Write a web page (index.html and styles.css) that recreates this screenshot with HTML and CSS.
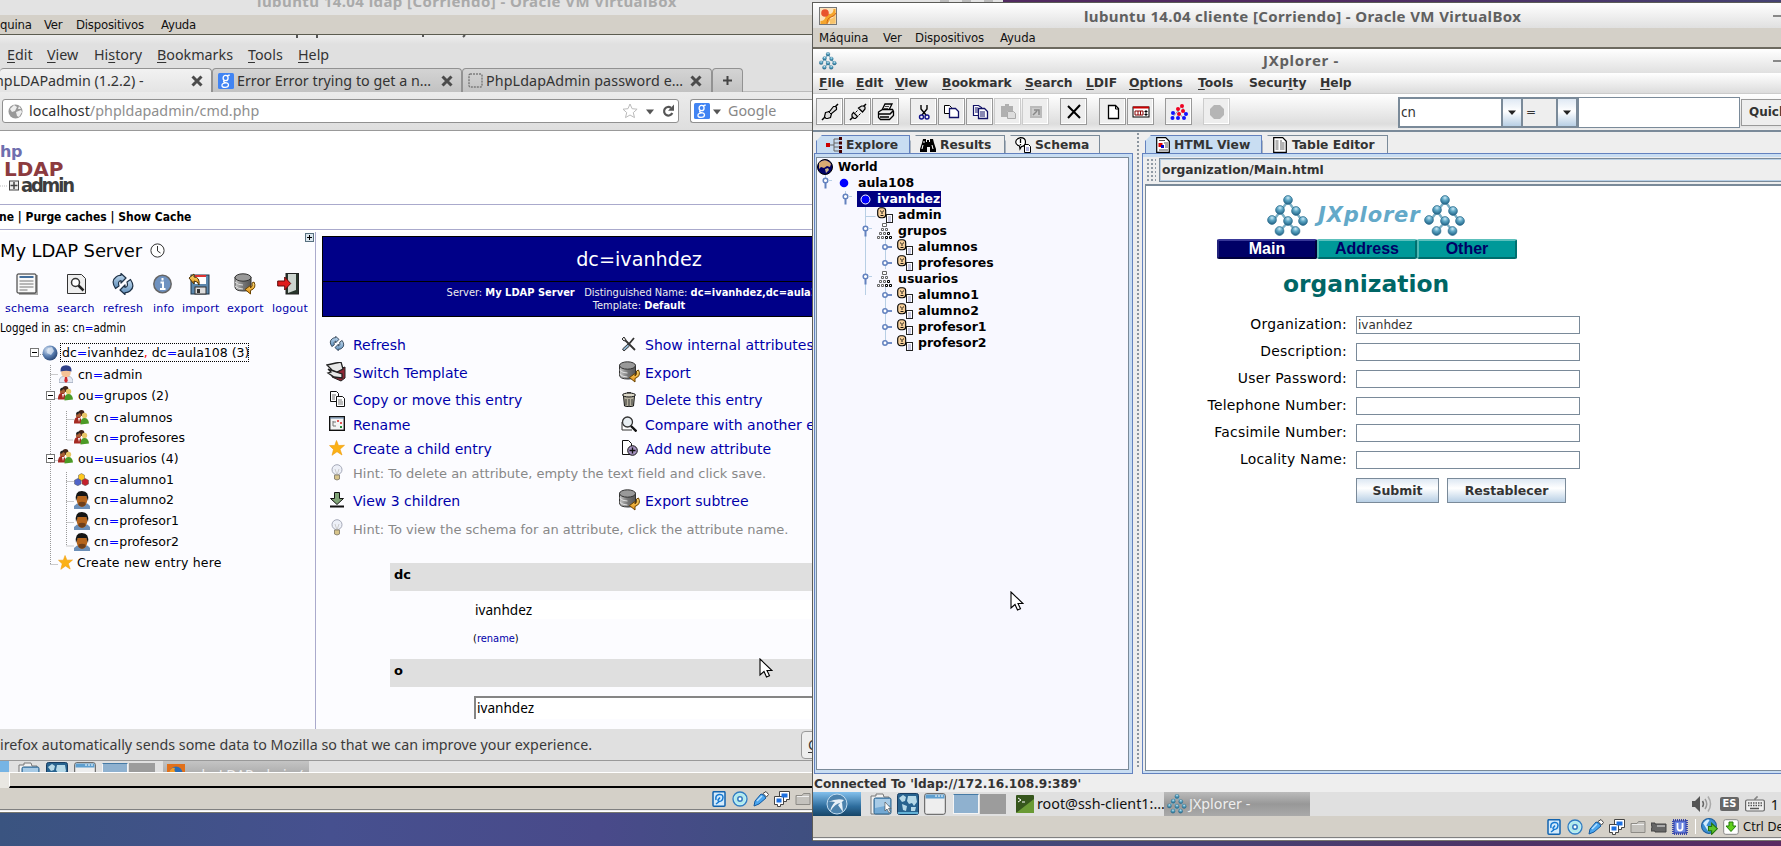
FILE: index.html
```html
<!DOCTYPE html>
<html lang="es">
<head>
<meta charset="utf-8">
<title>Escritorio</title>
<link rel="stylesheet" href="styles.css">
</head>
<body>
<svg class="defs" width="0" height="0">
  <defs>
    <linearGradient id="gSteel" x1="0" y1="0" x2="0" y2="1"><stop offset="0" stop-color="#c4dcf0"/><stop offset="1" stop-color="#5b8bb8"/></linearGradient>
    <linearGradient id="gGold" x1="0" y1="0" x2="0" y2="1"><stop offset="0" stop-color="#ffe27a"/><stop offset="1" stop-color="#e08a10"/></linearGradient>
    <linearGradient id="gDb" x1="0" x2="1"><stop offset="0" stop-color="#c8c8c8"/><stop offset=".5" stop-color="#777"/><stop offset="1" stop-color="#555"/></linearGradient>
    <radialGradient id="gBall" cx=".5" cy=".25" r=".75"><stop offset="0" stop-color="#cdeaf6"/><stop offset=".4" stop-color="#5fa8c6"/><stop offset="1" stop-color="#1d5f83"/></radialGradient>
    <radialGradient id="gGlobe" cx=".35" cy=".3" r=".8"><stop offset="0" stop-color="#d5e2f2"/><stop offset=".5" stop-color="#5f83b5"/><stop offset="1" stop-color="#1d3a68"/></radialGradient>
    <radialGradient id="gDisc"><stop offset="0" stop-color="#fff"/><stop offset=".3" stop-color="#e8c8f4"/><stop offset=".6" stop-color="#a8f0e8"/><stop offset="1" stop-color="#cfe6ff"/></radialGradient>
  </defs>
  <symbol id="close" viewBox="0 0 12 12"><path d="M1.500 1.500l9 9M10.500 1.500l-9 9" stroke="#4b4b4b" stroke-width="3"/></symbol>
  <symbol id="goog" viewBox="0 0 16 16"><rect width="16" height="16" rx="1.500" fill="#4184f3"/><g fill="none" stroke="#fff" stroke-width="1.300"><ellipse cx="7.600" cy="5" rx="2.500" ry="2.700"/><path d="M9.500 3.200q1-1.400 2.300-.9M6.500 7.600q-1.800 1 0 1.800 4 .4 4 2.600 0 2.400-3.400 2.400T4 12.300q0-2.200 4-2.400"/></g></symbol>
  <symbol id="arrow" viewBox="0 0 8 6"><path d="M0 .5h8l-4 5z" fill="#555"/></symbol>
  <symbol id="star" viewBox="0 0 16 16"><path d="M7.500.5l2 5 6-.2-4.500 3.900 2 5.800-5-3.300-5 3.600 1.500-5.900L.5 5.600l5.200-.1z" fill="#fbb116" stroke="#ef9b0a" stroke-width=".6"/></symbol>
  <symbol id="refresh" viewBox="0 0 22 22"><g fill="url(#gSteel)" stroke="#1f3247" stroke-width="1.200" stroke-linejoin="round"><path d="M3.500 15.500Q-1.500 8 4 4q2.500-2 5-1.500V.5L14 5 9 10V7.500Q5.500 8 7 13z"/><path d="M18.500 6.500q5 7.500-.5 11.500-2.500 2-5 1.500v2L8 17l5-5v2.500q3.500-.5 2-5.500z"/></g></symbol>
  <symbol id="disk-db" viewBox="0 0 22 22"><path d="M1 4v10q0 4 8.500 4T17 14V4z" fill="url(#gDb)" stroke="#333"/><ellipse cx="9" cy="4.500" rx="8" ry="3.700" fill="#999" stroke="#333"/><path d="M1 9q3 3.200 8 3M1 13q3 3 8 3" stroke="#ddd" fill="none"/><path d="M20 9q3 6-3.500 8.500V21L11 16.500l5.500-4v2.500q2.500-1.500 1.500-5z" fill="url(#gGold)" stroke="#6b4300"/></symbol>
  <symbol id="bulb" viewBox="0 0 12 17"><circle cx="6" cy="5.700" r="5" fill="#edf0f8" stroke="#a5a9b8"/><path d="M4 5l2 6 2-6" fill="none" stroke="#ccc"/><path d="M3.500 11h5v4q-2.500 2-5 0z" fill="#d8c58b" stroke="#8e8775"/></symbol>
  <symbol id="group" viewBox="0 0 15 15"><circle cx="7.500" cy="3" r="2.900" fill="#43261a"/><circle cx="4.500" cy="5.500" r="2.600" fill="#a85d34"/><circle cx="10.500" cy="5.500" r="2.700" fill="#e8c668"/><path d="M0 13.500q0-7 4-6.500 3.500 0 4 6.500z" fill="#a52a22"/><path d="M6.500 14.500q0-7 4-6.500 4 0 4.500 5.500z" fill="#4c9a26"/><path d="M2 4.500q0-3.500 4-3l-2 3z" fill="#222"/><path d="M4 8l1 4 1-4z" fill="#fff"/></symbol>
  <symbol id="man" viewBox="0 0 16 18"><path d="M0 18v-3q3-3 5-3h6q3 0 5 3v3z" fill="#6c8fb8"/><ellipse cx="8" cy="8.700" rx="5.300" ry="7" fill="#b5651d"/><path d="M2 10Q.5 0 8 .1T14 10l-1.700-5H3.700z" fill="#151515"/><path d="M4.500 11.500q3.500-1.500 7 0v2.500q-3.500 3.500-7 0z" fill="#70401a"/></symbol>
  <symbol id="admin" viewBox="0 0 14 18"><path d="M0 17.500q0-5.500 4-6h6q4 .5 4 6z" fill="#e3e8f2" stroke="#9aa4b8" stroke-width=".7"/><ellipse cx="7" cy="7.500" rx="4.800" ry="5" fill="#f5c397"/><path d="M1.500 6.500Q1 .2 7 .2t5.500 6.300q-5-1.500-11 0z" fill="#2e3f87"/><path d="M6 12h2l.8 4L7 18l-1.800-2z" fill="#d2292b"/></symbol>
  <symbol id="cubes" viewBox="0 0 15 13"><g stroke="#555" stroke-width=".5"><path d="M4.500 2.200L7.500.5l3 1.700v4L7.500 8l-3-1.800z" fill="#ffc71f"/><path d="M.5 7.200l3.300-1.700 3.200 1.700v3.800l-3.200 1.700L.5 11z" fill="#5064c8"/><path d="M8 7.200l3.300-1.700 3.200 1.700v3.800l-3.200 1.700L8 11z" fill="#c3202c"/></g></symbol>
  <symbol id="minus" viewBox="0 0 9 9"><rect x=".5" y=".5" width="8" height="8" fill="#fff" stroke="#777"/><path d="M2 4.500h5" stroke="#000"/></symbol>
  <symbol id="trial" viewBox="0 0 42 42"><g stroke="#7aaec4" stroke-width="2.400" fill="none"><path d="M21 6L6 26M21 6L36 27M13 16l8 11-8 9M21 27l8 9"/></g><g fill="url(#gBall)" stroke="#2c6c8c" stroke-width=".7"><circle cx="21" cy="5" r="4.400"/><circle cx="13" cy="15" r="4.400"/><circle cx="29" cy="16" r="4.400"/><circle cx="5" cy="25" r="4.400"/><circle cx="21" cy="26" r="4.400"/><circle cx="36" cy="26" r="4.400"/><circle cx="12.500" cy="36" r="4.400"/><circle cx="28.500" cy="36" r="4.400"/></g></symbol>
  <symbol id="person" viewBox="0 0 16 16"><rect x=".7" y=".7" width="8" height="10" rx="3" fill="#f6cf9a" stroke="#000" stroke-width="1.100"/><path d="M3 4h1M6 4h1M5 4v3M3.500 8.500h3" stroke="#000" stroke-width=".9"/><rect x="9.500" y="7.500" width="6" height="8" fill="#fff" stroke="#222"/><path d="M11 10h3M11 12h3M11 14h3" stroke="#7a7ab8" stroke-width=".8"/></symbol>
  <symbol id="org" viewBox="0 0 15 16"><g fill="#fff" stroke="#666"><path d="M5.500.5h4v3h-4zM4.500 5.500h2v2h-2zM8.500 5.500h2v2h-2z"/><path d="M2.500 9.500h2v2h-2zM6.500 9.500h2v2h-2z"/><path d="M.5 13.500h2v2h-2zM4.500 13.500h2v2h-2z"/><path stroke="#000" d="M10.500 9.500h2v2h-2zM8.500 13.500h2v2h-2zM12.500 13.500h2v2h-2z"/></g></symbol>
  <symbol id="key-open" viewBox="0 0 10 12"><path d="M3.500 4v7.500" stroke="#6382bf" stroke-width="2"/><circle cx="3.500" cy="3.500" r="2.300" fill="#fff" stroke="#6382bf" stroke-width="1.500"/><path d="M6 3.500h4" stroke="#b8cfe5"/></symbol>
  <symbol id="key-shut" viewBox="0 0 10 6"><path d="M4 3h6" stroke="#6382bf" stroke-width="1.800"/><circle cx="3" cy="3" r="2.200" fill="#fff" stroke="#6382bf" stroke-width="1.500"/></symbol>
  <symbol id="vm-hd" viewBox="0 0 16 16"><rect x="2" y=".7" width="12" height="14.500" rx="1" fill="#d4ebfc" stroke="#1263ae" stroke-width="1.500"/><path d="M5 9Q4 4 8 3.500t4 3q-.5 4-4 4-1 0-1-1.500L9 6.500M5 13l4-3" fill="none" stroke="#1477d0" stroke-width="1.500"/></symbol>
  <symbol id="vm-cd" viewBox="0 0 16 16"><circle cx="8" cy="8" r="7" fill="url(#gDisc)" stroke="#2f7dc0" stroke-width="1.300"/><circle cx="8" cy="8" r="2.200" fill="#fff" stroke="#2f7dc0" stroke-width="1.500"/></symbol>
  <symbol id="vm-usb" viewBox="0 0 16 16"><path d="M10 2.500l3-2 2.500 3-2 2.500z" fill="#fff" stroke="#444"/><path d="M1 15l1-5 6-7q3 0 5 4l-7 6z" fill="#4aa5ee" stroke="#1259a0"/><path d="M4 10l5-5" stroke="#b9e1ff" stroke-width="1.500"/></symbol>
  <symbol id="vm-net" viewBox="0 0 16 16"><g stroke="#444" fill="#fff"><path d="M5.500.5h10v8h-3v2h-3v-2h-4z"/><path d="M.5 5.500h9v8h-3v2h-3v-2h-3z"/></g><path d="M7.500 2.500h6v4h-6z" fill="#1c6fe0"/><path d="M2.500 7.500h5v4h-5z" fill="#1c6fe0"/></symbol>
  <symbol id="vm-dir" viewBox="0 0 16 16"><path d="M1 13.500v-9h6l1.500-2H15v11z" fill="#c4c2bd" stroke="#8d8b86"/><path d="M2 5.500h12" stroke="#eee"/></symbol>
  <symbol id="fm" viewBox="0 0 22 22"><path d="M1 21V3h5V1h7l1 3h5v17z" fill="#f2f2f2" stroke="#777"/><rect x="4" y="5" width="17" height="16" rx="1.500" fill="#73a9d4" stroke="#2d6189"/><path d="M5 6h15v6l-15 3z" fill="#a8cbe6"/></symbol>
  <symbol id="web" viewBox="0 0 22 22"><rect x=".5" y=".5" width="21" height="21" rx="2" fill="#28638f" stroke="#183d62"/><path d="M2 5l4-3 3 2-1 4-3 1zM11 3l8 0 1 6-3 4-2-3-3 1-2-3zM5 11l5 2-1 5-3-1zM14 14l5 0-1 4-4 0z" fill="#b6d9e8"/><path d="M1 20h20" stroke="#62b1d6" stroke-width="2"/></symbol>
  <symbol id="min-win" viewBox="0 0 22 22"><rect x=".7" y=".7" width="20.600" height="20.600" rx="2" fill="#eee" stroke="#555"/><path d="M1.500 1.500h19v4h-19z" fill="#5e9fcf"/><path d="M11 3h8" stroke="#fff" stroke-dasharray="2 1"/></symbol>
  <symbol id="cursor" viewBox="0 0 14 20"><path d="M1 1v16l4-3.500L7.500 19l3-1.300-2.500-5.200h5z" fill="#fff" stroke="#000" stroke-width="1.100"/></symbol>
</svg>

<div class="desktop">
  <!-- Ventana del servidor -->
  <section class="win win-left">
    <header class="lt-title"><span>lubuntu 14.04 ldap [Corriendo] - Oracle VM VirtualBox</span></header>
    <nav class="vm-menu vm-menu-left"><span>quina</span><span>Ver</span><span>Dispositivos</span><span>Ayuda</span></nav>
    <div class="fx-title"><svg width="812" height="3"><path d="M297 0v3M317 0v3M423 0v2M465 0l-2 2" stroke="#555" stroke-width="2"/></svg></div>
    <nav class="fx-menu"><span><u>E</u>dit</span><span><u>V</u>iew</span><span>Hi<u>s</u>tory</span><span><u>B</u>ookmarks</span><span><u>T</u>ools</span><span><u>H</u>elp</span></nav>
    <div class="fx-tabs">
      <div class="fx-tab active"><span class="t t1">hpLDAPadmin (1.2.2) -</span><svg width="12" height="12"><use href="#close"/></svg></div>
      <div class="fx-tab"><svg width="16" height="16"><use href="#goog"/></svg><span class="t t2">Error Error trying to get a n…</span><svg width="12" height="12"><use href="#close"/></svg></div>
      <div class="fx-tab"><svg width="15" height="15" viewBox="0 0 15 15"><rect x="1" y="1" width="13" height="13" rx="1" fill="none" stroke="#555" stroke-dasharray="2 1"/></svg><span class="t t3">PhpLdapAdmin password e…</span><svg width="12" height="12"><use href="#close"/></svg></div>
      <div class="fx-tab plus"><svg width="9" height="9" viewBox="0 0 9 9"><path d="M4.500 0v9M0 4.500h9" stroke="#444" stroke-width="2"/></svg></div>
    </div>
    <div class="fx-bar">
      <div class="url">
        <svg width="15" height="15" viewBox="0 0 15 15"><circle cx="7.500" cy="7.500" r="7" fill="#999"/><path d="M2 5l4-4 3 2-2 4-3 1zM8 8l5-2 1 2-3 5-2-1zM11 2l2 3-3 0z" fill="#eee"/></svg>
        <span class="addr">localhost<i>/phpldapadmin/cmd.php</i></span>
        <svg width="16" height="16" viewBox="0 0 16 16"><path d="M8 1l2.100 4.700 5 .5-3.800 3.400 1.200 5L8 12l-4.500 2.600 1.200-5L1 6.200l5-.5z" fill="#fff" stroke="#bbb"/></svg>
        <svg class="dd" width="8" height="6"><use href="#arrow"/></svg>
        <svg width="13" height="14" viewBox="0 0 13 14"><path d="M9 3.800A4.300 4.300 0 1 0 10.300 9" fill="none" stroke="#555" stroke-width="2.200"/><path d="M12 .5v6.300H6z" fill="#555"/></svg>
      </div>
      <div class="search"><svg width="16" height="16"><use href="#goog"/></svg><svg width="8" height="6"><use href="#arrow"/></svg><span>Google</span></div>
    </div>
    <div class="pla-head">
      <div class="logo-php">hp</div>
      <div class="logo-ldap">LDAP</div>
      <div class="logo-admin"><svg width="21" height="12" viewBox="0 0 21 12"><path d="M0 6h8" stroke="#bbb" stroke-dasharray="1 1"/><rect x="9.500" y="1" width="9" height="9" fill="#eee" stroke="#444"/><path d="M14 2v7M10.500 5.500h7" stroke="#444" stroke-width="1.500"/></svg><span>admin</span></div>
    </div>
    <div class="pla-crumb">ne | Purge caches | Show Cache</div>
    <div class="pla-body">
      <aside class="nav">
        <div class="plusbox"><svg width="9" height="9" viewBox="0 0 9 9"><rect x=".5" y=".5" width="8" height="8" fill="#dbe6ee" stroke="#57707f"/><path d="M2 4.500h5M4.500 2v5" stroke="#000"/></svg></div>
        <div class="srv"><span>My LDAP Server</span><svg width="15" height="15" viewBox="0 0 15 15"><circle cx="7.500" cy="7.500" r="6.600" fill="#fff" stroke="#333"/><path d="M7.500 3v5l3 2" fill="none" stroke="#333"/></svg></div>
        <div class="tools tool-icons">
          <svg width="22" height="22" viewBox="0 0 22 22"><path d="M3 21h18V2" fill="none" stroke="#aaa" stroke-width="2"/><rect x="1" y="1" width="19" height="19" rx="1" fill="#f8f8f8" stroke="#222"/><path d="M3.500 4h14" stroke="#456f9c" stroke-width="2"/><path d="M3.500 8h14M3.500 11h14M3.500 14h14M3.500 17h8" stroke="#777"/></svg>
          <svg width="22" height="22" viewBox="0 0 22 22"><path d="M1.500 1.500h14l4 4v15h-18z" fill="#eee" stroke="#333"/><circle cx="9.500" cy="9.500" r="4" fill="#fff" stroke="#333" stroke-width="1.500"/><path d="M12.500 12.500l5 5" stroke="#222" stroke-width="2.500"/></svg>
          <svg width="22" height="22"><use href="#refresh"/></svg>
          <svg width="22" height="22" viewBox="0 0 22 22"><circle cx="10.500" cy="11" r="8.700" fill="#6f92c0" stroke="#666" stroke-width="1.500"/><path d="M10.500 5v2.500M8.500 9.500h2.500v6M8 16h5.500" stroke="#fff" stroke-width="2" fill="none"/></svg>
          <svg width="22" height="22" viewBox="0 0 22 22"><rect x="3" y="2" width="18" height="19" fill="#5b87ac" stroke="#1d3347"/><rect x="7" y="2" width="11" height="9" fill="#fff"/><path d="M7 3h11" stroke="#d33" stroke-width="2"/><rect x="7" y="14" width="11" height="7" fill="#ddd" stroke="#333"/><path d="M9 16h3v4h-3z" fill="#333"/><path d="M1 5l5-4v3q6 0 5 8-1-4-5-4v3z" fill="url(#gGold)" stroke="#523300"/></svg>
          <svg width="22" height="22"><use href="#disk-db"/></svg>
          <svg width="22" height="22" viewBox="0 0 22 22"><rect x="9" y=".5" width="12.500" height="20.500" fill="#27352b" stroke="#222"/><path d="M11 1h8v16l-8 3z" fill="#ccd4cf"/><path d="M.7 8h7V4l6 6.500-6 6.500v-4h-7z" fill="#e01b1b" stroke="#5e0a0a"/></svg>
        </div>
        <div class="tools tool-labels"><span>schema</span><span>search</span><span>refresh</span><span>info</span><span>import</span><span>export</span><span>logout</span></div>
        <div class="logged">Logged in as: cn<b>=</b>admin</div>
        <div class="ptree">
          <svg class="lines" width="100" height="236" viewBox="0 0 100 236"><path d="M50.500 24v200M50.500 33.500h8M40 13.500h4M50.500 57.500h8M66.500 70v29h7M66.500 78.500h7M50.500 119.500h8M66.500 131v74h7M66.500 140.500h7M66.500 160.500h7M66.500 181.500h7M50.500 223.500h7" fill="none" stroke="#999" stroke-dasharray="1 1"/></svg>
          <div class="pr l0 h23"><svg width="9" height="9"><use href="#minus"/></svg><svg width="16" height="16" viewBox="0 0 16 16"><circle cx="8" cy="8" r="7.500" fill="url(#gGlobe)"/><path d="M6 3l4-1 2 4-3 4-4-2z" fill="#e5edf5" opacity=".7"/></svg><span class="sel">dc<b>=</b>ivanhdez<em>,</em> dc<b>=</b>aula108 (3)</span></div>
          <div class="pr l1 h20"><svg width="14" height="18"><use href="#admin"/></svg><span>cn<b>=</b>admin</span></div>
          <div class="pr lg h23"><svg width="9" height="9"><use href="#minus"/></svg><svg width="15" height="15"><use href="#group"/></svg><span>ou<b>=</b>grupos (2)</span></div>
          <div class="pr l2 h20"><svg width="15" height="15"><use href="#group"/></svg><span>cn<b>=</b>alumnos</span></div>
          <div class="pr l2 h20"><svg width="15" height="15"><use href="#group"/></svg><span>cn<b>=</b>profesores</span></div>
          <div class="pr lg h22"><svg width="9" height="9"><use href="#minus"/></svg><svg width="15" height="15"><use href="#group"/></svg><span>ou<b>=</b>usuarios (4)</span></div>
          <div class="pr l2 h20"><svg width="15" height="13"><use href="#cubes"/></svg><span>cn<b>=</b>alumno1</span></div>
          <div class="pr l2 h21"><svg width="16" height="18"><use href="#man"/></svg><span>cn<b>=</b>alumno2</span></div>
          <div class="pr l2 h21"><svg width="16" height="18"><use href="#man"/></svg><span>cn<b>=</b>profesor1</span></div>
          <div class="pr l2 h21"><svg width="16" height="18"><use href="#man"/></svg><span>cn<b>=</b>profesor2</span></div>
          <div class="pr lc h21"><svg width="15" height="15"><use href="#star"/></svg><span>Create new entry here</span></div>
        </div>
      </aside>
      <main class="entry">
        <div class="banner">
          <h1>dc=ivanhdez</h1>
          <p>Server: <b>My LDAP Server</b> &nbsp; Distinguished Name: <b>dc=ivanhdez,dc=aula108</b><br>Template: <b>Default</b></p>
        </div>
        <div class="acts">
          <div class="act"><svg width="16" height="15"><use href="#refresh"/></svg><a>Refresh</a></div>
          <div class="act"><svg width="16" height="16" viewBox="0 0 16 16"><path d="M3 3l11 11M13 2L8 8" stroke="#333" stroke-width="1.800"/><path d="M1 3l2-2 2 3-2 1z" fill="#ddd" stroke="#333"/><path d="M7 8l-5.500 5L3 15l5.500-5z" fill="#8fb4d0" stroke="#333"/></svg><a>Show internal attributes</a></div>
          <div class="act"><svg width="22" height="20" viewBox="0 0 22 20"><path d="M7 9l12-4v11l-4 3-9-4z" fill="#8e2634" stroke="#222"/><path d="M1 3l9-2 5-1 2 7-6 3-5-2zM2 7l5 2 9 3v4l-8-1-6-4 3-1z" fill="#e8e8e8" stroke="#222" stroke-width="1.300"/></svg><a>Switch Template</a></div>
          <div class="act"><svg width="23" height="22"><use href="#disk-db"/></svg><a>Export</a></div>
          <div class="act"><svg width="16" height="16" viewBox="0 0 16 16"><g fill="#fff" stroke="#111"><path d="M1.500.5h6l2 2v8h-8z"/><path d="M7.500 5.500h6l2 2v8h-8z"/></g><path d="M3 4h4M3 6h3M3 8h3M9 9h4M9 11h5M9 13h5" stroke="#777"/></svg><a>Copy or move this entry</a></div>
          <div class="act"><svg width="16" height="16" viewBox="0 0 16 16"><path d="M2.500 5h11l-1 10q-4.500 1.500-9 0z" fill="#b5b09e" stroke="#111"/><ellipse cx="8" cy="4" rx="6.500" ry="2" fill="#dcd8c8" stroke="#111"/><path d="M6 1.500h4M5 8v6M8 8v7M11 8v6" stroke="#333"/></svg><a>Delete this entry</a></div>
          <div class="act"><svg width="16" height="15" viewBox="0 0 16 15"><rect x=".7" y=".7" width="14.600" height="13.600" fill="#f4f4f4" stroke="#111" stroke-width="1.400"/><path d="M1 2h14" stroke="#5a7fa5"/><path d="M4 5v5h3M4 6h3" stroke="#777" fill="none"/><path d="M8 5h2M11 7h2" stroke="#d22" stroke-width="1.500"/><path d="M11 11h2" stroke="#283" stroke-width="2"/></svg><a>Rename</a></div>
          <div class="act"><svg width="16" height="16" viewBox="0 0 16 16"><path d="M1 6v8h10" fill="#fff" stroke="#333"/><circle cx="6.500" cy="6" r="5" fill="#e8eef2" stroke="#333" stroke-width="1.300"/><path d="M10 10l5.500 5.500" stroke="#111" stroke-width="2.400"/></svg><a>Compare with another entry</a></div>
          <div class="act"><svg width="16" height="16"><use href="#star"/></svg><a>Create a child entry</a></div>
          <div class="act"><svg width="17" height="16" viewBox="0 0 17 16"><path d="M1.500.5h6l3 3v11h-9z" fill="#fff" stroke="#111"/><circle cx="11.500" cy="10.500" r="4.800" fill="#a592c0" stroke="#111"/><path d="M11.500 7.500v6M8.500 10.500h6" stroke="#111" stroke-width="1.300"/></svg><a>Add new attribute</a></div>
          <div class="act hint"><svg width="12" height="17"><use href="#bulb"/></svg><span>Hint: To delete an attribute, empty the text field and click save.</span></div>
          <div class="act"><svg width="14" height="16" viewBox="0 0 14 16"><path d="M4.500.5h5v6h4L7 12.500.5 6.500h4z" fill="#7fa376" stroke="#111"/><path d="M0 14.500h14" stroke="#111" stroke-width="2"/></svg><a>View 3 children</a></div>
          <div class="act"><svg width="23" height="22"><use href="#disk-db"/></svg><a>Export subtree</a></div>
          <div class="act hint"><svg width="12" height="17"><use href="#bulb"/></svg><span>Hint: To view the schema for an attribute, click the attribute name.</span></div>
        </div>
        <div class="attr a1">dc</div>
        <div class="val v1">ivanhdez</div>
        <div class="ren">(<a>rename</a>)</div>
        <div class="attr a2">o</div>
        <div class="val v2">ivanhdez</div>
      </main>
    </div>
    <div class="fx-note"><span>irefox automatically sends some data to Mozilla so that we can improve your experience.</span><div class="btn"><u>C</u></div></div>
    <div class="tb-cut">
      <i class="start"></i>
      <svg width="22" height="22"><use href="#fm"/></svg><svg width="22" height="22"><use href="#web"/></svg><svg width="22" height="22"><use href="#min-win"/></svg>
      <i class="pg on"></i><i class="pg"></i>
      <div class="task"><svg width="18" height="18" viewBox="0 0 18 18"><rect width="18" height="18" fill="#e1701a"/><circle cx="9" cy="9" r="6.500" fill="#2b6cb4"/><path d="M2 9q2-6 6-5-2 4 3 5 3-1 4 1-2 6-7 6t-6-7z" fill="#f29a26"/></svg><span>phpLDAPadmin (</span></div>
    </div>
    <div class="hscroll"><div class="thumb"></div></div>
    <div class="vm-status left"><svg width="16" height="16"><use href="#vm-hd"/></svg><svg width="16" height="16"><use href="#vm-cd"/></svg><svg width="16" height="16"><use href="#vm-usb"/></svg><svg width="16" height="16"><use href="#vm-net"/></svg><svg width="16" height="16"><use href="#vm-dir"/></svg></div>
    <div class="edge"></div>
  </section>
  <svg class="cursor c1" width="14" height="20"><use href="#cursor"/></svg>
  <div class="title-rest"><i></i><i></i><i></i></div>

  <!-- Ventana del cliente -->
  <section class="win win-right">
    <header class="rt-title"><svg width="18" height="18" viewBox="0 0 18 18"><rect x=".5" y=".5" width="17" height="17" fill="#fbe3bb" stroke="#777"/><path d="M1.500 14q4 0 5-4t5-3q3-1 3-5h2v4q-1 4-5 4-1 7-5 7H1.500z" fill="#f5a52c"/><path d="M11 17v-5q4-1 5.500-4v8.500z" fill="#f8c36a"/><path d="M8 17q0-6 4-7t5-4" stroke="#cf6315" fill="none"/><circle cx="6" cy="6" r="3.800" fill="#e8542d"/></svg><span>lubuntu 14.04 cliente [Corriendo] - Oracle VM VirtualBox</span><i></i></header>
    <nav class="vm-menu vm-menu-right"><span>Máquina</span><span>Ver</span><span>Dispositivos</span><span>Ayuda</span></nav>
    <header class="jx-title"><svg width="18" height="18"><use href="#trial"/></svg><span>JXplorer -</span><i></i></header>
    <nav class="jx-menu"><span><u>F</u>ile</span><span><u>E</u>dit</span><span><u>V</u>iew</span><span><u>B</u>ookmark</span><span><u>S</u>earch</span><span><u>L</u>DIF</span><span><u>O</u>ptions</span><span><u>T</u>ools</span><span>Secur<u>i</u>ty</span><span><u>H</u>elp</span></nav>
    <div class="jx-bar">
      <div class="b"><svg width="18" height="18" viewBox="0 0 18 18"><path d="M1 17l4-4M13 5l4-4" stroke="#000" stroke-width="1.500"/><path d="M4.500 9.500l4-1 4-5h2l1 1v2l-5 4-1 4-3 1H5l-1.500-2z" fill="#ddd" stroke="#000" stroke-width="1.200"/><path d="M7 8l3.500 3.500" stroke="#000"/></svg></div>
      <div class="b"><svg width="18" height="18" viewBox="0 0 18 18"><path d="M1 17l3-3M14 4l3-3" stroke="#000" stroke-width="1.500"/><path d="M4.500 9.500l4 4-2 2H5L3 13.500v-2zM9.500 5l3-2h2l1.500 1v2l-2.500 3z" fill="#ddd" stroke="#000" stroke-width="1.200"/><path d="M6.500 9.500l2-2M9.500 12.500l2-2" stroke="#000"/></svg></div>
      <div class="b"><svg width="18" height="18" viewBox="0 0 18 18"><path d="M5 7l3-6h7l-3 6M1.500 9l4-2.500h10l1 2v4l-4 4h-9l-2-2z" fill="#eee" stroke="#000" stroke-width="1.300"/><path d="M2 11h11l3-3M3 14h9" stroke="#000" stroke-width="1.500" fill="none"/><path d="M8 3.500h4M7 5.500h4" stroke="#444"/></svg></div>
      <div class="b g1"><svg width="18" height="18" viewBox="0 0 18 18"><path d="M6 2v4l5 6M12 2v4L7 12" stroke="#000" stroke-width="1.400" fill="none"/><circle cx="6.500" cy="14" r="2" fill="none" stroke="#118" stroke-width="1.400"/><circle cx="12" cy="14" r="2" fill="none" stroke="#118" stroke-width="1.400"/></svg></div>
      <div class="b"><svg width="18" height="18" viewBox="0 0 18 18"><path d="M1.500 2.500h5l2 2v6h-7z" fill="#fff" stroke="#000"/><path d="M6.500 5.500h6l3 3v6h-9z" fill="#fff" stroke="#116" stroke-width="1.300"/></svg></div>
      <div class="b"><svg width="18" height="18" viewBox="0 0 18 18"><path d="M2.500 2.500h5l3 2v8h-8z" fill="#fff" stroke="#116" stroke-width="1.200"/><path d="M7.500 5.500h6l3 3v7h-9z" fill="#fff" stroke="#116" stroke-width="1.300"/><path d="M4 5h3M4 7h3M4 9h3M9 9h5M9 11h5M9 13h5" stroke="#116"/></svg></div>
      <div class="b off"><svg width="18" height="18" viewBox="0 0 18 18"><path d="M2 3h12v5h-6v6H2zM6 1h4v3H6z" fill="#b0b0b0"/><path d="M8.500 8.500h6l2 2v5h-8z" fill="#ddd" stroke="#aaa"/></svg></div>
      <div class="b off"><svg width="18" height="18" viewBox="0 0 18 18"><path d="M3 3h12v12H3z" fill="#bbb"/><path d="M5 5h8v8H5z" fill="#ccc"/><path d="M6 12l4-4M7 7h5v5" stroke="#888" stroke-width="1.500" fill="none"/></svg></div>
      <div class="b g2"><svg width="18" height="18" viewBox="0 0 18 18"><path d="M3 3l12 12M15 2L3 15" stroke="#000" stroke-width="2"/></svg></div>
      <div class="b g3"><svg width="18" height="18" viewBox="0 0 18 18"><path d="M4.500 2.500h7l3 3v10h-10z" fill="#fff" stroke="#000" stroke-width="1.300"/><path d="M11.500 3v3h3" fill="none" stroke="#000"/></svg></div>
      <div class="b"><svg width="18" height="18" viewBox="0 0 18 18"><rect x="1" y="4" width="16" height="10" fill="#fff" stroke="#000"/><path d="M1 4.500h16" stroke="#c00" stroke-width="2"/><path d="M3 8h8v4H3zM6 8v4M8.500 8v4" fill="none" stroke="#800"/><path d="M14 7v6M12.500 8.500h3M12.500 11.500h3" stroke="#000"/></svg></div>
      <div class="b g2"><svg width="18" height="18" viewBox="0 0 18 18"><path d="M12 3L2 15M12 3l4 10M8 8l5 7" stroke="#99a" stroke-width="1" fill="none"/><g fill="#f00021"><circle cx="12" cy="3" r="2"/><circle cx="8" cy="6" r="2"/><circle cx="13" cy="8" r="2"/><circle cx="9" cy="11" r="2"/></g><g fill="#1212ff"><circle cx="3" cy="10" r="2"/><circle cx="2.500" cy="15" r="2"/><circle cx="16" cy="11" r="2"/><circle cx="8" cy="15" r="2"/><circle cx="14" cy="15" r="2"/></g></svg></div>
      <div class="b off g2"><svg width="18" height="18" viewBox="0 0 18 18"><path d="M6 2h6l4 4v6l-4 4H6l-4-4V6z" fill="#b5b5b5"/></svg></div>
      <div class="quick">
        <div class="cb cb1">cn</div><div class="dd"><svg width="10" height="6" viewBox="0 0 8 6"><path d="M0 .5h8L4 5z" fill="#222"/></svg></div>
        <div class="cb cb2">=</div><div class="dd"><svg width="10" height="6" viewBox="0 0 8 6"><path d="M0 .5h8L4 5z" fill="#222"/></svg></div>
        <div class="cb cb3"></div><div class="qb">Quick Search</div>
      </div>
    </div>
    <div class="jx-body">
      <div class="pane p-tree">
        <div class="jtabs">
          <div class="jt on t-ex"><svg width="16" height="16" viewBox="0 0 16 16"><path d="M3 8h5M8 2v12M8 2h6M8 6h6M8 10h6M8 14h6" stroke="#666" fill="none"/><path d="M0 6h4v4H0z" fill="#c00"/><path d="M13 0h3v3h-3zM13 4.500h3v3h-3zM13 9h3v3h-3zM13 13h3v3h-3z" fill="#400"/></svg>Explore</div>
          <div class="jt t-re"><svg width="16" height="16" viewBox="0 0 16 16"><path d="M3 2h3v3h1V3h2v2h1V2h3l1 4 2 6v3h-6v-5H7v5H0v-3l2-6z" fill="#000"/><path d="M3 8l-1 4M12 8l1 4M4 4v2" stroke="#fff"/></svg>Results</div>
          <div class="jt t-sc"><svg width="16" height="16" viewBox="0 0 16 16"><path d="M5.500.7q5 0 5 4.300t-4 4.500L5 12l-.5-3Q.7 8 .7 5T5.500.7z" fill="#fff" stroke="#000" stroke-width="1.200"/><path d="M5.500 2v4M5.500 7v1.300" stroke="#000" stroke-width="1.300"/><path d="M9.500 7.500h4l2 2v6h-6z" fill="#fff" stroke="#000"/><path d="M11 11h3M11 13h3" stroke="#66b"/></svg>Schema</div>
        </div>
        <div class="frame"><div class="jtree">
          <svg class="jlines" width="90" height="192" viewBox="0 0 90 192"><path d="M8.500 16v8M28.500 32v8M48.500 48v88M48.500 57.500h10M68.500 80v30M68.500 128v56" stroke="#b8cfe5" fill="none"/></svg>
          <div class="jr"><svg width="16" height="16" viewBox="0 0 16 16"><circle cx="8" cy="8" r="7.500" fill="#000066" stroke="#000"/><path d="M2 4q6-6 12 1l-1 3-3-1-3 2-3-1-2 2z" fill="#d9ab73"/><path d="M8 10l3-1 1 2-3 3z" fill="#c7b088"/></svg><span class="w">World</span></div>
          <div class="jr j1"><svg width="10" height="12"><use href="#key-open"/></svg><svg class="dot" width="10" height="10"><circle cx="5" cy="5" r="4.300" fill="#0000ff"/></svg><span>aula108</span></div>
          <div class="jr j2"><svg width="10" height="12"><use href="#key-open"/></svg><span class="jsel"><svg width="11" height="11"><circle cx="5.500" cy="5.500" r="4.500" fill="#00f" stroke="#fff"/></svg>ivanhdez</span></div>
          <div class="jr j3"><i></i><svg width="16" height="16"><use href="#person"/></svg><span>admin</span></div>
          <div class="jr j3"><svg width="10" height="12"><use href="#key-open"/></svg><svg width="15" height="16"><use href="#org"/></svg><span>grupos</span></div>
          <div class="jr j4"><svg width="10" height="6"><use href="#key-shut"/></svg><svg width="16" height="16"><use href="#person"/></svg><span>alumnos</span></div>
          <div class="jr j4"><svg width="10" height="6"><use href="#key-shut"/></svg><svg width="16" height="16"><use href="#person"/></svg><span>profesores</span></div>
          <div class="jr j3"><svg width="10" height="12"><use href="#key-open"/></svg><svg width="15" height="16"><use href="#org"/></svg><span>usuarios</span></div>
          <div class="jr j4"><svg width="10" height="6"><use href="#key-shut"/></svg><svg width="16" height="16"><use href="#person"/></svg><span>alumno1</span></div>
          <div class="jr j4"><svg width="10" height="6"><use href="#key-shut"/></svg><svg width="16" height="16"><use href="#person"/></svg><span>alumno2</span></div>
          <div class="jr j4"><svg width="10" height="6"><use href="#key-shut"/></svg><svg width="16" height="16"><use href="#person"/></svg><span>profesor1</span></div>
          <div class="jr j4"><svg width="10" height="6"><use href="#key-shut"/></svg><svg width="16" height="16"><use href="#person"/></svg><span>profesor2</span></div>
        </div></div>
      </div>
      <div class="split"></div>
      <div class="pane p-html">
        <div class="jtabs">
          <div class="jt on t-hv"><svg width="14" height="16" viewBox="0 0 14 16"><path d="M.7.700h9l3.600 3.600v11H.7z" fill="#fff" stroke="#000" stroke-width="1.200"/><path d="M2.500 6h4v4h-4z" fill="#d00"/><path d="M5 8h3v3H5z" fill="#00c"/><path d="M3 3.500h6M8 6h4M9 8h3M9 10h3M3 13h9" stroke="#555"/></svg>HTML View</div>
          <div class="jt t-te"><svg width="14" height="16" viewBox="0 0 14 16"><path d="M.7.700h9l3.600 3.600v11H.7z" fill="#fff" stroke="#000" stroke-width="1.200"/><path d="M2.500 4h3M7 4h2M2.500 6h3M7 6h4.500M2.500 8h3M7 8h4.500M2.500 10h3M7 10h4.500M2.500 12h3M7 12h4.500" stroke="#666"/></svg>Table Editor</div>
        </div>
        <div class="frame hv">
          <div class="pathbar"><div class="grip"></div><div class="path">organization/Main.html</div></div>
          <div class="page">
            <div class="brand"><svg width="42" height="42"><use href="#trial"/></svg><span>JXplorer</span><svg width="42" height="42"><use href="#trial"/></svg></div>
            <div class="pills"><span class="on">Main</span><span>Address</span><span>Other</span></div>
            <h2>organization</h2>
            <div class="form">
              <label>Organization:</label><div class="in">ivanhdez</div>
              <label>Description:</label><div class="in"></div>
              <label>User Password:</label><div class="in"></div>
              <label>Telephone Number:</label><div class="in"></div>
              <label>Facsimile Number:</label><div class="in"></div>
              <label>Locality Name:</label><div class="in"></div>
            </div>
            <div class="btns"><div class="jb s">Submit</div><div class="jb r">Restablecer</div></div>
          </div>
        </div>
      </div>
    </div>
    <div class="jx-status">Connected To 'ldap://172.16.108.9:389'</div>
    <div class="taskbar">
      <div class="startb"><svg width="22" height="22" viewBox="0 0 22 22"><circle cx="11" cy="11" r="10" fill="#4b82ad" stroke="#c3ddf0"/><path d="M2 9q9-4 16-2l-3 3q-6 0-11 9 1-6 5-10-4-1-7 0zM12 12l5 7-1-10z" fill="#e6f0f8"/></svg></div>
      <svg class="i1" width="22" height="22" viewBox="0 0 22 22"><use href="#fm"/><path d="M15 9v9l2-2 2 4 1.500-1-2-3.500h2.500z" fill="#fff" stroke="#444" stroke-width=".6"/></svg>
      <svg class="i2" width="22" height="22"><use href="#web"/></svg>
      <svg class="i2" width="22" height="22"><use href="#min-win"/></svg>
      <i class="pg on"></i><i class="pg"></i>
      <svg class="i3" width="18" height="18" viewBox="0 0 18 18"><rect width="18" height="18" rx="1" fill="#36561d"/><path d="M0 18L18 4v14z" fill="#6a9a35"/><path d="M2 3l3 2-3 2M6 7h3" stroke="#fff" fill="none"/></svg>
      <span class="t-root">root@ssh-client1:…</span>
      <div class="t-jx"><svg width="20" height="20"><use href="#trial"/></svg><span>JXplorer -</span></div>
      <div class="tray">
        <svg width="20" height="18" viewBox="0 0 20 18"><path d="M0 6h3l5-5v16l-5-5H0z" fill="#555"/><path d="M10.500 6q2 3 0 6" stroke="#666" stroke-width="1.500" fill="none"/><path d="M13 4q3.500 5 0 10" stroke="#999" stroke-width="1.500" fill="none"/><path d="M16 1.500q5 7.500 0 15" stroke="#aaa" stroke-width="1.500" fill="none"/></svg>
        <b>ES</b>
        <svg width="20" height="16" viewBox="0 0 20 16"><path d="M10 4V2h2V0" stroke="#666" fill="none"/><rect x=".6" y="4" width="18.800" height="11" rx="1.500" fill="#f0f0f0" stroke="#666" stroke-width="1.200"/><path d="M3 7h14M3 9.500h14" stroke="#555" stroke-width="1.500" stroke-dasharray="1.500 1"/><path d="M5 12.500h9" stroke="#555" stroke-width="1.500"/></svg>
        <span>1</span>
      </div>
    </div>
    <div class="vm-status right"><svg width="16" height="16"><use href="#vm-hd"/></svg><svg width="16" height="16"><use href="#vm-cd"/></svg><svg width="16" height="16"><use href="#vm-usb"/></svg><svg width="16" height="16"><use href="#vm-net"/></svg><svg width="16" height="16"><use href="#vm-dir"/></svg><svg width="16" height="16" viewBox="0 0 16 16"><path d="M0 4h4v1h11v8H4v-1H0l1-4z" fill="#666" stroke="#444"/><path d="M6 7h8" stroke="#aaa" stroke-width="2"/></svg><svg width="16" height="16" viewBox="0 0 16 16"><rect x="1" y="1" width="14" height="14" fill="none" stroke="#3b48a8" stroke-width="2" stroke-dasharray="1 1"/><rect x="2" y="2" width="12" height="12" fill="#6d86e0" stroke="#2f3fa8"/><path d="M5.500 4v5q0 2.500 2.500 2.500T10.500 9V4" fill="none" stroke="#fff" stroke-width="1.800"/></svg><i class="sep"></i><svg width="17" height="17" viewBox="0 0 16 16"><circle cx="7.500" cy="7.500" r="7" fill="#3a8ed2" stroke="#1d5c9c"/><path d="M2 5q4-5 6-3l-3 5 4 2-2 4z" fill="#d3ecff"/><path d="M7 8h3V5l5.500 5-5.500 5.500V12H7z" fill="#5cc52c" stroke="#23720d"/></svg><svg width="16" height="16" viewBox="0 0 16 16"><rect x=".7" y=".7" width="14.600" height="14.600" rx="2" fill="#fff" stroke="#888"/><path d="M6 3h4v4h3l-5 5.500L3 7h3z" fill="#5fd01c" stroke="#247a0a"/></svg><span>Ctrl Derecho</span></div>
    <div class="edge"></div>
  </section>
  <svg class="cursor c2" width="14" height="20"><use href="#cursor"/></svg>
</div>
</body>
</html>
```
FILE: styles.css
```css
* { box-sizing: border-box; }
body { margin: 0; font-family: "DejaVu Sans", sans-serif; white-space: nowrap; }
svg { display: block; flex: none; }
.defs { position: absolute; }
u { text-decoration: underline; text-underline-offset: 2px; text-decoration-thickness: 1px; }
i, em { font-style: normal; }

.desktop { position: relative; width: 1781px; height: 846px; overflow: hidden; background: linear-gradient(90deg, #3a5480 0, #46508f 330px, #494a8a 600px, #3f4f80 800px, #464576 1150px, #4c3366 1500px, #5a2a62 1781px); }
.win { position: absolute; overflow: hidden; display: flex; flex-direction: column; }
.win > * { flex: none; }
.win-left { left: 0; top: 0; width: 812px; height: 813px; background: #e0e0e0; }
.win-right { left: 812px; top: 2px; width: 969px; height: 839px; background: #eee; border: solid #5c5c58; border-width: 1px 0 0 1px; }
.title-rest { position: absolute; left: 812px; top: 0; width: 969px; height: 2px; display: flex; gap: 13px; padding-left: 128px; background: linear-gradient(90deg, #e3e3e3 191px, #512a60 191px, #512a60 500px, #454272 969px); }
.title-rest i { width: 9px; height: 2px; background: #bbb; }
.cursor { position: absolute; }
.c1 { left: 759px; top: 658px; }
.c2 { left: 1010px; top: 591px; }

/* VirtualBox chrome */
.lt-title { height: 15px; overflow: hidden; background: #e3e3e3; }
.lt-title span { display: block; margin: -10px 0 0 257px; font: bold 15px/22px "Noto Sans", sans-serif; color: #aaa; letter-spacing: .42px; }
.vm-menu { display: grid; font: 13px/20px "DejaVu Sans Condensed", "DejaVu Sans", sans-serif; color: #111; background: #d4d0c8; border-bottom: 1px solid #5c5c50; }
.vm-menu-left { height: 20px; grid-template-columns: 44px 32px 85px 60px; letter-spacing: -.2px; }
.vm-menu-right { height: 21px; padding-left: 6px; grid-template-columns: 64px 32px 85px 60px; border-bottom: 2px solid #6d6a60; letter-spacing: -.1px; }
.edge { height: 4px; background: linear-gradient(#808080 0 1px, #eee 1px 2px, #fff 2px 3px, #77776f 3px 4px); }
.vm-status { height: 21px; display: flex; align-items: center; background: #d4d0c8; }
.vm-status.left { padding-left: 711px; gap: 5px; }
.vm-status.right { padding-left: 733px; gap: 5px; font: 13px "DejaVu Sans Condensed", "DejaVu Sans", sans-serif; color: #111; }
.vm-status .sep { width: 2px; height: 15px; margin-left: 2px; background: #777; border-right: 1px solid #fff; }
.vm-status.right span { margin-left: -1px; }

/* Firefox */
.fx-title { height: 9px; background: linear-gradient(#eee, #e0e0e0); }
.fx-menu { height: 24px; display: grid; grid-template-columns: 40px 47px 63px 91px 50px 60px; padding-left: 7px; font: 14.3px/22px "Noto Sans", sans-serif; color: #333; }
.fx-tabs { height: 24px; display: flex; border-bottom: 1px solid #bbb; }
.fx-tab { width: 250px; height: 24px; display: flex; align-items: center; padding-left: 5px; border: 1px solid #929292; border-radius: 4px 4px 0 0; border-bottom: 0; background: linear-gradient(#d4d4d4, #c2c2c2); font: 14.3px/22px "Noto Sans", sans-serif; color: #333; }
.fx-tab.active { width: 212px; padding-left: 0; background: linear-gradient(#f2f2f2, #e4e4e4); border-left: 0; }
.fx-tab .t { overflow: hidden; }
.t1 { width: 191px; text-indent: -5px; }
.t2 { width: 204px; margin-left: 3px; }
.t3 { width: 204px; margin-left: 3px; letter-spacing: .1px; }
.fx-tab.plus { width: 31px; padding-left: 10px; }
.fx-bar { height: 39px; display: flex; gap: 11px; padding: 7px 0 0 2px; background: linear-gradient(#ebebeb, #dedede); border-bottom: 1px solid #999; font: 14.3px/20px "Noto Sans", sans-serif; color: #333; }
.url, .search { height: 24px; flex: none; display: flex; align-items: center; background: #fff; border: 1px solid #909090; border-radius: 3px; }
.url { width: 677px; padding-left: 5px; }
.addr { width: 593px; margin-left: 6px; letter-spacing: .05px; }
.addr i { color: #8e8e8e; }
.url .dd { margin: 2px 8px 0 8px; }
.search { width: 140px; padding-left: 3px; color: #888; border-right: 0; }
.search svg + svg { margin: 2px 7px 0 3px; }

/* phpLDAPadmin */
.pla-head { height: 74px; padding-top: 12px; background: #fff; border-bottom: 1px solid #aaaacc; }
.logo-php { font: bold 16px/18px "DejaVu Sans", sans-serif; height: 18px; color: #6f6fae; letter-spacing: -.5px; }
.logo-ldap { font: bold 20px/16px "DejaVu Sans", sans-serif; color: #8c3b3f; letter-spacing: 0; margin-left: 4px; }
.logo-admin { display: flex; align-items: center; font: bold 20px/17px "DejaVu Sans Condensed", "DejaVu Sans", sans-serif; color: #3d3d3d; letter-spacing: -2.2px; }
.pla-crumb { height: 25px; background: #fff; border-bottom: 1px solid #aaaacc; font: bold 12px/24px "DejaVu Sans Condensed", "DejaVu Sans", sans-serif; text-indent: -1px; }
.pla-body { height: 499px; display: flex; background: #fcfcff; border-top: 2px solid #fff; }
.nav { width: 316px; border-right: 1px solid #aaaacc; padding-top: 1px; }
.plusbox { height: 9px; padding-left: 305px; }
.srv { height: 22px; display: flex; align-items: center; gap: 5px; margin-top: -3px; font-size: 18px; padding-left: 0; }
.srv span { width: 145px; letter-spacing: -.1px; }
.tools { display: grid; }
.tool-icons { grid-template-columns: 50px 46px 41px 35px 46px 43px 30px; padding: 12px 0 0 16px; height: 41px; }
.tool-icons svg:nth-child(4) { margin-left: -1px; }
.tool-labels { grid-template-columns: 52px 46px 50px 29px 45px 45px 40px; padding-left: 5px; height: 17px; font-size: 11px; line-height: 13px; color: #0000aa; letter-spacing: .2px; }
.logged { height: 22px; font: 11.500px/18px "DejaVu Sans Condensed", "DejaVu Sans", sans-serif; }
.logged b, .ptree b { font-weight: normal; color: #00f; }
.ptree { position: relative; font-size: 12.5px; padding-top: 0; }
.lines, .jlines { position: absolute; left: 0; top: 0; }
.pr { display: flex; align-items: center; position: relative; }
.pr em { color: #f00; }
.h20 { height: 20px; } .h21 { height: 21px; } .h22 { height: 22px; } .h23 { height: 23px; }
.l0 { padding-left: 30px; }
.l0 svg + svg { margin: 0 2px 0 3px; }
.sel { border: 1px dotted #000; line-height: 17px; width: 189px; padding-left: 1px; }
.l1 { padding-left: 59px; gap: 5px; }
.lg { padding-left: 46px; }
.lg svg + svg { margin: -4px 5px 0 3px; }
.l2 { padding-left: 74px; }
.l2 span { margin-left: auto; width: 221px; }
.lc { padding-left: 58px; gap: 4px; letter-spacing: .2px; }

.entry { width: 496px; overflow: hidden; padding-top: 4px; }
.banner { width: 634px; height: 81px; margin-left: 6px; background: #000088; color: #fff; border: 1px solid #000; text-align: center; }
.banner h1 { margin: 0; height: 45px; border-bottom: 1px solid #000; font-weight: normal; font-size: 19.200px; line-height: 45px; }
.banner p { margin: 0; padding-top: 4px; font: 11px/13px "DejaVu Sans Condensed", "DejaVu Sans", sans-serif; color: #eee; }
.banner b { color: #fff; }
.acts { display: grid; grid-template-columns: 292px 292px; grid-template-rows: 28px 28px 26px 24px 24px 25px 30px 26px; align-items: center; margin: 14px 0 0 7px; font-size: 14px; color: #888; }
.act { display: grid; grid-template-columns: 30px auto; align-items: center; color: #888; }
.act > svg { justify-self: center; margin-top: -3px; margin-left: -2px; }
.act a, .ren a { color: #0000aa; }
.hint { grid-column: 1 / 3; font-size: 13px; }
.attr { height: 28px; margin-left: 74px; padding-left: 4px; background: #dfdfdf; font: bold 13px/24px "DejaVu Sans", sans-serif; }
.a1 { margin-top: 21px; }
.val { font: 13.600px/20px "Noto Sans", sans-serif; background: #fff; }
.v1 { height: 19px; margin: 9px 0 0 157px; padding-left: 2px; }
.ren { height: 40px; padding: 13px 0 0 157px; font: 11px/14px "DejaVu Sans Condensed", "DejaVu Sans", sans-serif; }
.v2 { height: 23px; margin: 9px 0 0 158px; padding-left: 1px; border: solid #858585; border-width: 2px 0 0 2px; }
.fx-note { height: 32px; display: flex; justify-content: space-between; background: #e0e0e0; border-bottom: 1px solid #999; font: 14.270px/32px "Noto Sans", sans-serif; color: #3a3a3a; }
.fx-note .btn { width: 20px; height: 28px; margin: 2px -9px 0 0; padding-left: 6px; line-height: 26px; border: 1px solid #999; border-radius: 4px; background: #eee; }
.tb-cut { height: 11px; overflow: hidden; display: flex; align-items: flex-start; }
.tb-cut .start { width: 9px; height: 11px; background: #76b4e4; margin-right: 9px; }
.tb-cut svg { margin: 1px 6px 0 0; }
.pg { flex: none; width: 26px; height: 20px; background: #9c9c9c; margin-top: 2px; }
.pg.on { background: #8fb1cf; border: 1px solid #f4f4f4; border-top: 1px solid #467aa5; margin-right: 1px; }
.task { width: 146px; height: 24px; margin-left: 8px; display: flex; background: linear-gradient(#c4c4c4, #999); color: #eee; font: 14px/20px "Noto Sans", sans-serif; }
.tb-cut .task svg { margin: 3px 8px 0 4px; }
.task span { margin-top: 4px; }
.hscroll { height: 16px; padding-left: 9px; background: #e9e7e2; }
.thumb { height: 16px; background: #d4d0c8; border: 1px solid #fff; border-right: 0; border-bottom: 2px solid #000; }

/* JXplorer */
.rt-title { height: 25px; display: flex; align-items: center; padding-left: 6px; background: linear-gradient(#fff, #e0e0e0); font: bold 15px/24px "Noto Sans", sans-serif; color: #606060; }
.rt-title span { width: 690px; margin-left: 247px; letter-spacing: .38px; }
.rt-title i, .jx-title i { width: 8px; height: 2px; background: #888; }
.jx-title { height: 24px; display: flex; align-items: center; padding-left: 6px; background: linear-gradient(#fff, #e0e0e0); font: bold 15px/22px "Noto Sans", sans-serif; color: #606060; }
.jx-title span { width: 511px; margin: -2px 0 0 426px; letter-spacing: .7px; }
.jx-menu { height: 21px; display: grid; grid-template-columns: 37px 39px 47px 83px 61px 43px 69px 51px 71px 40px; padding-left: 6px; background: linear-gradient(#fff, #dcdcdc); border-bottom: 1px solid #ccc; font: bold 12.300px/20px "DejaVu Sans", sans-serif; color: #333; }
.jx-bar { height: 38px; display: flex; align-items: flex-start; padding: 3px 0 0 3px; background: linear-gradient(#fff, #ddd 30px, #eee); border-bottom: 2px solid #7a8a99; }
.jx-bar .b { flex: none; width: 27px; height: 27px; margin: 1px 1px 0 0; padding: 4px; border: 1px solid #999; background: #eee; box-shadow: inset -1px -1px #fff; }
.jx-bar .off { border-color: #ccc; }
.jx-bar .g1 { margin-left: 10px; }
.jx-bar .g2 { margin-left: 10px; }
.jx-bar .g3 { margin-left: 11px; }
.quick { display: flex; flex: none; margin-left: auto; width: 383px; overflow: hidden; font: bold 12px/29px "DejaVu Sans", sans-serif; color: #333; }
.quick > * { flex: none; }
.cb { height: 31px; border: 2px solid #7a8a99; padding-left: 1px; background: #fff; }
.cb1 { width: 105px; font: 13.500px/27px "Noto Sans", sans-serif; }
.cb2 { width: 35px; border-left: 0; background: #eee; padding-left: 3px; font-weight: normal; line-height: 27px; }
.cb3 { width: 162px; border-width: 1px; }
.quick .dd { width: 20px; height: 31px; display: flex; align-items: center; justify-content: center; border: solid #7a8a99; border-width: 2px 2px 2px 0; background: linear-gradient(#dfe9f4, #fff 45%, #b8cfe5); }
.qb { height: 27px; margin: 2px 0 0 1px; padding-left: 7px; width: 100px; border: 1px solid #999; line-height: 25px; background: #eee; }
.jx-body { height: 642px; display: flex; margin-top: 0; }
.pane { display: flex; flex-direction: column; overflow: hidden; flex: none; }
.p-tree { width: 320px; }
.p-html { width: 639px; }
.split { flex: none; width: 9px; height: 636px; border-left: 3px solid #eee; border-right: 2px solid #eee; background: radial-gradient(circle, #8a949e .8px, #eee 1px) 0 0 / 4px 4px; }
.jtabs { height: 21px; padding: 3px 0 0 3px; display: flex; background: #eee; }
.jt { height: 18px; display: flex; align-items: center; border: 1px solid #7a8a99; border-left: 1px solid #aab4c0; border-bottom: 0; background: #eee; font: bold 12.300px/18px "DejaVu Sans", sans-serif; color: #333; clip-path: polygon(6px 0, 100% 0, 100% 100%, 0 100%, 0 6px); }
.jt.on { background: #c8ddf2; border-color: #6382bf; }
.t-ex { width: 94px; padding-left: 9px; gap: 4px; }
.t-re { width: 95px; padding-left: 9px; gap: 4px; }
.t-sc { width: 95px; padding-left: 9px; gap: 4px; }
.t-hv { width: 117px; padding-left: 10px; gap: 4px; }
.t-te { width: 126px; padding-left: 10px; gap: 5px; }
.p-tree .frame { margin-left: 1px; height: 621px; border: 1px solid #6382bf; background: #c8ddf2; padding: 3px 3px 3px 1px; }
.jtree { position: relative; height: 613px; border: 1px solid #7a8a99; background: #f8f8ff; padding-top: 1px; font: bold 12.500px/16px "DejaVu Sans", sans-serif; }
.jr { position: relative; height: 16px; display: flex; align-items: center; }
.jr .w { margin-left: 5px; font-size: 12px; }
.j1 { padding-left: 5px; } .j2 { padding-left: 25px; } .j3 { padding-left: 45px; } .j4 { padding-left: 65px; }
.j1 .dot { margin: 0 9px 0 7px; }
.j2 > svg { margin-right: 5px; }
.jsel { display: flex; align-items: center; height: 16px; width: 84px; padding-left: 3px; background: #000080; color: #fff; }
.jsel svg { margin-right: 6px; }
.j3 > i { width: 10px; }
.j3 > :nth-child(2), .j4 > :nth-child(2) { margin: 0 5px 0 5px; }
.j3 > svg[width="15"]:nth-child(2) { margin-right: 6px; }
.jlines { top: 1px; }
.hv { height: 621px; border: solid #6382bf; border-width: 1px 0 1px 1px; background: linear-gradient(#c8ddf2 3px, #eee 3px 617px, #c8ddf2 617px); padding: 4px 0 3px 2px; }
.p-html .jtabs { padding-left: 3px; }
.pathbar { height: 26px; display: flex; }
.grip { width: 10px; height: 25px; margin: 0 3px 0 1px; background: radial-gradient(circle, #909aa4 .8px, #eee 1px) 0 0 / 4px 4px; }
.path { flex: 1; height: 24px; border: 1px solid #7a8a99; border-right: 0; box-shadow: inset 1px 1px #b8cfe5, inset 0 -1px #b8cfe5; padding-left: 2px; font: bold 12.300px/22px "DejaVu Sans", sans-serif; color: #333; }
.page { height: 587px; background: #fff; border: 1px solid #7a8a99; border-width: 2px 0 1px 1px; padding-top: 9px; }
.brand { display: flex; align-items: center; padding-left: 121px; height: 42px; font: italic bold 21px/30px "DejaVu Sans", sans-serif; color: #63a9c9; letter-spacing: .85px; }
.brand span { width: 106px; margin: 0 0 2px 9px; }
.pills { display: flex; margin: 2px 0 0 71px; font: bold 16px/18px "Liberation Sans", Arial, sans-serif; text-align: center; color: #000066; }
.pills span { width: 100px; height: 20px; border: 2px solid; border-color: #5cc0bc #00706f #006d6c #4fb8b4; border-radius: 2px; line-height: 16px; background: #009999; }
.pills .on { color: #fff; background: #000066; border-color: #383898 #00003c #00003c #22227c; }
.page h2 { margin: 9px 0 0 137px; font: bold 23.400px/32px "DejaVu Sans", sans-serif; color: #006666; }
.form { display: grid; grid-template-columns: 201px 224px; grid-auto-rows: 18px; gap: 9px; margin-top: 16px; }
.form label { font-size: 13.900px; line-height: 16px; text-align: right; letter-spacing: .25px; }
.in { height: 18px; border: 1px solid #7a8a99; padding-left: 1px; font-size: 12px; line-height: 17px; color: #333; }
.btns { display: flex; gap: 8px; padding: 9px 0 0 210px; }
.jb { height: 25px; border: 1px solid #7a8a99; background: linear-gradient(#dde8f3, #fff 40%, #b8cfe5); text-align: center; font: bold 12.500px/23px "DejaVu Sans", sans-serif; color: #333; }
.jb.s { width: 83px; } .jb.r { width: 119px; }
.jx-status { height: 18px; padding-left: 1px; font: bold 12.150px/20px "DejaVu Sans", sans-serif; color: #333; }
.taskbar { height: 24px; display: flex; background: #e0e0e0; font: 14.300px/23px "Noto Sans", sans-serif; color: #111; }
.taskbar > * { flex: none; }
.startb { width: 48px; padding: 1px 0 0 13px; background: linear-gradient(#83c0ec, #2e6d9d 60%, #174567); }
.i1, .i2 { margin-top: 1px; }
.i1 { margin-left: 9px; } .i2 { margin-left: 5px; }
.taskbar .pg.on { margin-left: 7px; }
.i3 { margin: 3px 3px 0 10px; }
.t-root { width: 127px; }
.t-jx { width: 146px; display: flex; gap: 2px; padding: 2px 0 0 3px; background: linear-gradient(#bbb, #989898 50%, #aaa); color: #eee; line-height: 20px; }
.tray { width: 87px; overflow: hidden; display: flex; align-items: center; justify-content: flex-start; margin-left: 382px; }
.tray b { width: 20px; margin: 0 6px 0 8px; background: #666; color: #fff; border-radius: 2px; text-align: center; font: bold 11px/14px "DejaVu Sans Condensed", sans-serif; }
.tray span { margin-left: 6px; }
```
